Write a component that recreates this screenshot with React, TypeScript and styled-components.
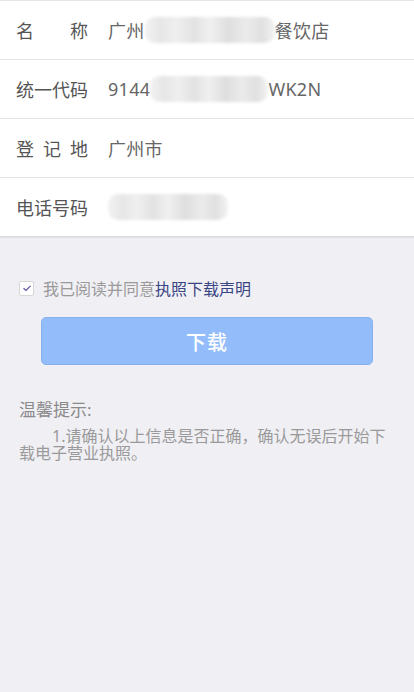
import React, { useState } from 'react';
import styled, { createGlobalStyle } from 'styled-components';

const GlobalStyle = createGlobalStyle`
  html, body {
    margin: 0;
    padding: 0;
    background: #f0eff4;
    font-family: "Noto Sans", "Noto Sans CJK SC", sans-serif;
  }
`;

interface InfoRow {
  label: string;
  before?: string;
  mosaic?: number;
  after?: string;
}

const rows: InfoRow[] = [
  { label: '名称', before: '广州', mosaic: 130, after: '餐饮店' },
  { label: '统一代码', before: '9144', mosaic: 118, after: 'WK2N' },
  { label: '登记地', before: '广州市' },
  { label: '电话号码', before: '', mosaic: 120 },
];

const App: React.FC = () => {
  const [agreed, setAgreed] = useState(true);

  return (
    <Page>
      <GlobalStyle />
      <InfoList>
        {rows.map((row) => (
          <Row key={row.label}>
            <Label>{row.label}</Label>
            <Value>
              {row.before}
              {row.mosaic && <Mosaic $width={row.mosaic} />}
              {row.after}
            </Value>
          </Row>
        ))}
      </InfoList>

      <AgreeLine onClick={() => setAgreed(!agreed)}>
        <CheckBox>
          {agreed && (
            <svg width="10" height="10" viewBox="0 0 10 10">
              <path d="M1.5 5.2 L4 7.5 L8.5 2.8" fill="none" stroke="#5a55a8" strokeWidth="1.2" />
            </svg>
          )}
        </CheckBox>
        <AgreeText>
          我已阅读并同意<AgreeLink>执照下载声明</AgreeLink>
        </AgreeText>
      </AgreeLine>

      <DownloadButton>下载</DownloadButton>

      <Tips>
        <TipsTitle>温馨提示:</TipsTitle>
        <TipsText>1.请确认以上信息是否正确，确认无误后开始下载电子营业执照。</TipsText>
      </Tips>
    </Page>
  );
};

export default App;

const Page = styled.div`
  min-height: 692px;
  background: #f0eff4;
`;

const InfoList = styled.div`
  background: #fff;
  border-top: 1px solid #e6e6e6;
  box-shadow: 0 1px 1px rgba(0, 0, 0, 0.06);
`;

const Row = styled.div`
  display: flex;
  align-items: center;
  height: 58px;
  padding-left: 16px;
  border-bottom: 1px solid #e3e3e3;
  font-size: 18px;

  &:last-child {
    border-bottom-color: #dcdcdc;
  }
`;

const Label = styled.div`
  width: 72px;
  color: #555;
  text-align: justify;
  text-align-last: justify;
  margin-right: 20px;
  flex-shrink: 0;
`;

const Value = styled.div`
  display: flex;
  align-items: center;
  color: #666;
  white-space: nowrap;
  letter-spacing: 0.3px;
`;

const Mosaic = styled.span<{ $width: number }>`
  display: inline-block;
  width: ${(p) => p.$width}px;
  height: 26px;
  border-radius: 10px;
  background: linear-gradient(
    90deg,
    #f2f2f2 0%,
    #e6e6e6 12%,
    #efefef 24%,
    #e2e2e2 38%,
    #f0f0f0 50%,
    #dedede 64%,
    #ebebeb 78%,
    #e0e0e0 90%,
    #f3f3f3 100%
  );
  filter: blur(1.5px);
`;

const AgreeLine = styled.div`
  display: flex;
  align-items: center;
  margin: 42px 0 0 19px;
  height: 18px;
  cursor: pointer;
`;

const CheckBox = styled.span`
  display: inline-flex;
  align-items: center;
  justify-content: center;
  width: 13px;
  height: 13px;
  background: #fff;
  border: 1px solid #d6d6d6;
  border-radius: 2px;
  margin-right: 9px;
`;

const AgreeText = styled.span`
  font-size: 16px;
  color: #9a9a9a;
`;

const AgreeLink = styled.span`
  color: #3a4583;
`;

const DownloadButton = styled.button`
  display: block;
  width: 80%;
  height: 48px;
  margin: 20px auto 0;
  background: #93bdfa;
  border: 1px solid #86b2f0;
  border-radius: 5px;
  color: #fff;
  font-family: inherit;
  font-size: 20px;
  font-weight: 500;
  letter-spacing: 1px;
`;

const Tips = styled.div`
  margin: 34px 19px 0 19px;
`;

const TipsTitle = styled.div`
  font-size: 17px;
  color: #8a8a8a;
  line-height: 22px;
`;

const TipsText = styled.p`
  margin: 7px 0 0 0;
  font-size: 16px;
  line-height: 17px;
  color: #9a9a9a;
  text-indent: 33px;
`;
